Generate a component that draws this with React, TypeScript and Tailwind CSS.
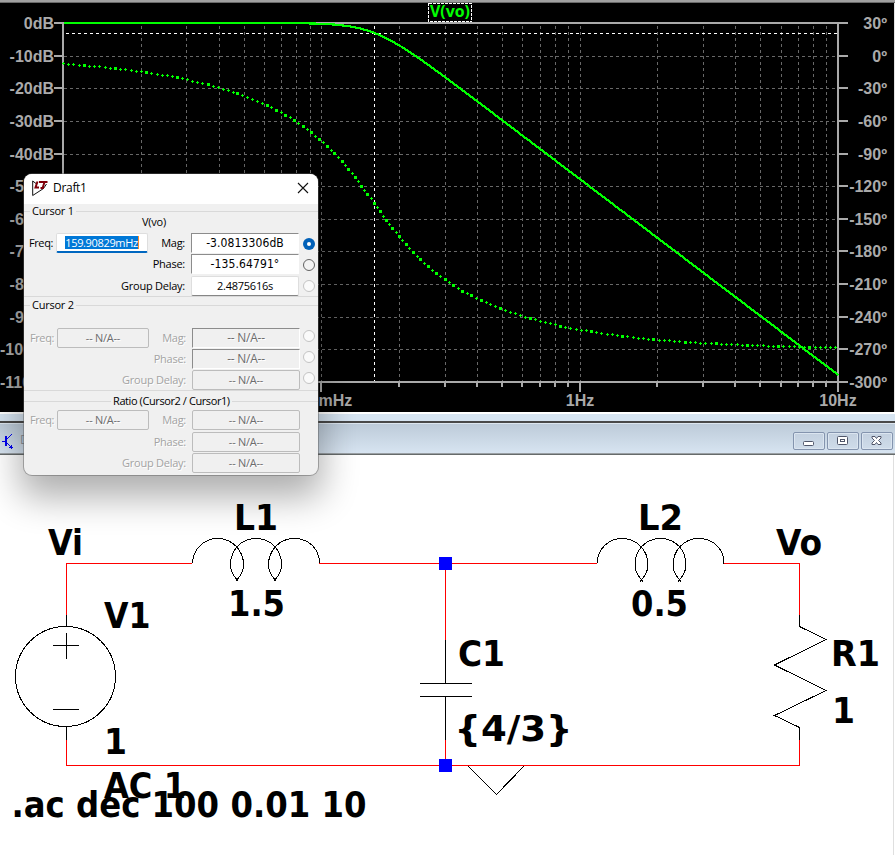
import React from 'react';

const ROWS = [23, 56, 88, 121, 154, 186, 219, 251, 284, 317, 349, 382];
const DB_LABELS = ['0dB', '-10dB', '-20dB', '-30dB', '-40dB', '-50dB', '-60dB', '-70dB', '-80dB', '-90dB', '-100dB', '-110dB'];
const DEG_LABELS = ['30º', '0º', '-30º', '-60º', '-90º', '-120º', '-150º', '-180º', '-210º', '-240º', '-270º', '-300º'];

const LEFT = 63;
const DECADE = 258.33;

const xOf = (f: number) => LEFT + Math.log10(f / 0.01) * DECADE;
const freqAt = (x: number) => 0.01 * Math.pow(10, (x - LEFT) / DECADE);

// third-order Butterworth low-pass, cut-off at 1 rad/s
const magY = (x: number) => {
  const w = 2 * Math.PI * freqAt(x);
  return 23 + 10 * Math.log10(1 + Math.pow(w, 6)) * 3.2636;
};
const phaseY = (x: number) => {
  const w = 2 * Math.PI * freqAt(x);
  const deg = (-(Math.atan(w) + Math.atan2(w, 1 - w * w)) * 180) / Math.PI;
  return 23 + ((30 - deg) * 359) / 330;
};

const magPoints = Array.from({ length: 156 }, (_, i) => {
  const x = LEFT + i * 5;
  return `${x + 0.5},${magY(x).toFixed(1)}`;
}).join(' ');

type Dot = { x: number; y: number; bold: boolean };
const phaseDots: Dot[] = [];
{
  let travelled = 5.17;
  for (let x = LEFT; x < 838; x += 0.1) {
    const dy = phaseY(x + 0.1) - phaseY(x);
    if (travelled >= 5.17) {
      const n = phaseDots.length;
      phaseDots.push({ x: Math.round(x), y: Math.round(phaseY(x)), bold: dy > 0.045 ? n % 2 === 0 : n % 6 === 4 });
      travelled = 0;
    }
    travelled += Math.hypot(0.1, dy);
  }
}

const gridX: { x: number; major: boolean }[] = [];
[0.01, 0.1, 1].forEach((d) => {
  for (let k = 1; k <= 9; k++) gridX.push({ x: Math.round(xOf(d * k)), major: k === 1 });
});
gridX.push({ x: 838, major: true });

function Plot() {
  return (
    <svg className="block" width="894" height="409" viewBox="0 3 894 409">
      <g stroke="#686868" strokeDasharray="3 3" shapeRendering="crispEdges">
        {gridX.filter((g) => g.x > 64 && g.x < 838).map((g) => (
          <line key={g.x} x1={g.x + 0.5} x2={g.x + 0.5} y1={26} y2={381} />
        ))}
        {ROWS.slice(1, -1).map((y) => (
          <line key={y} x1={64} x2={837} y1={y + 0.5} y2={y + 0.5} />
        ))}
      </g>
      <g stroke="#aaaaaa" strokeWidth={2} shapeRendering="crispEdges">
        <path d="M54 23H848M54 382H848M63 22V392M838 22V392" fill="none" />
        {ROWS.map((y) => (
          <path key={y} d={`M54 ${y}H63M838 ${y}H848`} />
        ))}
        {gridX.map((g) => (
          <line key={g.x} x1={g.x} x2={g.x} y1={382} y2={g.major ? 392 : 387} />
        ))}
      </g>
      <g stroke="#ffffff" strokeDasharray="3 3" shapeRendering="crispEdges">
        <line x1={66} x2={837} y1={33.5} y2={33.5} />
        <line x1={374.5} x2={374.5} y1={26} y2={381} />
      </g>
      <polyline points={magPoints} fill="none" stroke="#00ff00" strokeWidth={2.2} shapeRendering="crispEdges" />
      <g fill="#00ff00" shapeRendering="crispEdges">
        {phaseDots.map(({ x, y, bold }, i) => (
          <path key={i} d={bold ? `M${x - 1} ${y - 1}h3v3h-3z` : `M${x - 1} ${y}h3v1h-3zM${x} ${y - 1}h1v3h-1z`} />
        ))}
      </g>
      <g fill="#aaaaaa" className="font-['Liberation_Sans',Arial,sans-serif] text-[16px] font-bold">
        {ROWS.map((y, i) => (
          <React.Fragment key={y}>
            <text x={i > 9 ? 0 : 54} y={y + 6} textAnchor={i > 9 ? 'start' : 'end'}>{DB_LABELS[i]}</text>
            <text x={887} y={y + 6} textAnchor="end">{DEG_LABELS[i]}</text>
          </React.Fragment>
        ))}
        <text x={322} y={406} textAnchor="middle">100mHz</text>
        <text x={580} y={406} textAnchor="middle">1Hz</text>
        <text x={838} y={406} textAnchor="middle">10Hz</text>
      </g>
      <rect x={428.5} y={3.5} width={43} height={18} fill="#000" stroke="#fff" strokeDasharray="3 1" shapeRendering="crispEdges" />
      <text x={430} y={17} textLength={40} lengthAdjust="spacingAndGlyphs" fill="#00ff00" className="font-['Open_Sans','Noto_Sans',sans-serif] text-[16px] font-bold">V(vo)</text>
    </svg>
  );
}

function WindowButton({ children }: { children: React.ReactNode }) {
  return (
    <div className="flex h-[18px] w-8 items-center justify-center rounded-[2px] border border-[#8494ae] bg-linear-to-b from-[#c3d0df] to-[#cfdcea] shadow-[inset_0_0_0_1px_#dbe5f0]">
      {children}
    </div>
  );
}

function SchematicTitleBar() {
  return (
    <div className="flex h-[43px] flex-col">
      <div className="h-[2px] bg-white" />
      <div className="h-[7px] bg-[#d6e4f1]" />
      <div className="h-[2px] bg-[#494949]" />
      <div className="flex h-[30px] items-center border-t border-[#dde6ef] bg-linear-to-b from-[#bdcbd9] to-[#d7e4f1] pr-[2px]">
        <svg className="ml-[2px] mt-1" width="12" height="18" viewBox="0 0 12 18" fill="none" stroke="#0000f0" shapeRendering="crispEdges">
          <path d="M0 9.500H4M10 2L5 7M5 11L10 16M7 15.500H11M9.500 13V17" />
          <path d="M4 4V14" strokeWidth="2" />
        </svg>
        <span className="ml-[6px] mt-[3px] font-['Open_Sans',sans-serif] text-[12px] text-[#8d949c]">Draft1</span>
        <div className="ml-auto mt-[5px] flex gap-[2px]">
          <WindowButton>
            <svg className="mt-1" width="12" height="5" viewBox="0 0 12 5"><rect x=".5" y=".5" width="10" height="4" rx="1" fill="#fff" stroke="#50566a" /></svg>
          </WindowButton>
          <WindowButton>
            <svg width="12" height="10" viewBox="0 0 12 10"><rect x=".5" y=".5" width="10" height="8" rx="1" fill="#fff" stroke="#50566a" /><rect x="3.500" y="3.500" width="4" height="2" fill="#fff" stroke="#50566a" /></svg>
          </WindowButton>
          <WindowButton>
            <svg width="12" height="10" viewBox="0 0 12 10"><path d="M1 .5h3l1.500 2 1.500-2h3v1.500l-2.500 2.500 2.500 2.500v1.500h-3l-1.500-2-1.500 2h-3v-1.500l2.500-2.500-2.500-2.500z" fill="#fff" stroke="#50566a" /></svg>
          </WindowButton>
        </div>
      </div>
      <div className="h-px bg-[#9aa0a4]" />
      <div className="h-px bg-[#666b6b]" />
    </div>
  );
}

const COIL =
  'M192.500 563.500C193 549 204 538.500 217.500 538.500C232 538.500 243.500 550 243.500 565C243.500 570 241.500 574 238.500 578L235.500 581.500' +
  'M238.500 581.500L235.500 578C232.500 574 230.500 570 230.500 565C230.500 550 241 538.500 256 538.500C271 538.500 281.500 550 281.500 565C281.500 570 279.500 574 276.500 578L273.500 581.500' +
  'M276.500 581.500L273.500 578C270.500 574 268.500 570 268.500 565C268.500 550 280 538.500 294 538.500C309 538.500 319.500 549 319.500 563.500';

const SCHEMATIC_TEXT: [number, number, number, string][] = [
  [234, 530, 44, 'L1'],
  [228, 616, 57, '1.5'],
  [48, 555, 35, 'Vi'],
  [104, 628, 46.5, 'V1'],
  [104, 754, 23, '1'],
  [104, 798, 82, 'AC 1'],
  [11.5, 817, 355, '.ac dec 100 0.01 10'],
  [458, 666, 47, 'C1'],
  [454.5, 741, 118, '{4/3}'],
  [638, 530, 45, 'L2'],
  [631, 616, 57, '0.5'],
  [776, 555, 46, 'Vo'],
  [831, 666, 49, 'R1'],
  [832, 723, 23, '1'],
];

function Schematic() {
  return (
    <svg className="block" width="893" height="400" viewBox="0 455 893 400">
      <g fill="none" stroke="#000" shapeRendering="crispEdges">
        <circle cx="65.500" cy="676.500" r="50" />
        <path d="M66.500 615V626M66.500 726V740M53 645.500H79M66.500 633V659M53 709.500H79" />
        <path d={COIL} />
        <path d={COIL} transform="translate(404.500 0)" />
        <path d="M445.500 640V684M420 683.500H472M420 696.500H472M445.500 697V740" />
        <path d="M799.500 615V626.500L826 639.500L774.500 665L826 690.500L774.500 715.500L799.500 727.500V740" />
        <path d="M468 766L496.500 794.500L524 766" />
      </g>
      <path
        d="M66.500 615V563.500H192M319 563.500H597M724 563.500H799.500V615M66.500 740V765.500H799.500V740M445.500 563V640M445.500 740V765"
        fill="none"
        stroke="#ff0000"
        shapeRendering="crispEdges"
      />
      <rect x="439" y="557" width="13" height="13" fill="#0000ff" />
      <rect x="439" y="759" width="13" height="13" fill="#0000ff" />
      <g className="font-['DejaVu_Sans_Condensed','DejaVu_Sans',sans-serif] text-[35.5px] font-bold">
        {SCHEMATIC_TEXT.map(([x, y, w, t]) => (
          <text key={`${x}-${y}`} x={x} y={y} textLength={w} lengthAdjust="spacingAndGlyphs">{t}</text>
        ))}
      </g>
    </svg>
  );
}

type Radio = 'on' | 'off' | 'disabled';

function RadioDot({ state }: { state: Radio }) {
  if (state === 'on') {
    return (
      <span className="ml-1 mt-[2px] flex size-3 items-center justify-center rounded-full bg-[#0060b8]">
        <span className="size-1 rounded-full bg-white" />
      </span>
    );
  }
  return state === 'off' ? (
    <span className="ml-1 mt-[2px] size-3 rounded-full border border-[#626262] bg-[#f3f3f3]" />
  ) : (
    <span className="ml-1 size-3 rounded-full border border-[#c4c4c4] bg-[#fafafa]" />
  );
}

function Field({ label, value, className }: { label: string; value: string; className: string }) {
  return (
    <>
      <span className="ml-auto mr-[6px]">{label}</span>
      <span className={`flex h-5 w-[108px] items-center justify-center border ${className}`}>{value}</span>
    </>
  );
}

const SUNKEN = 'border-t-[#8c8c8c] border-l-[#8c8c8c] border-r-white border-b-white';
const WHITE_SUNKEN = `${SUNKEN} bg-white font-['DejaVu_Sans_Condensed',sans-serif] text-[12px] tracking-[0.1px]`;
const GREY_SUNKEN = `${SUNKEN} text-[12px] text-[#6d6d6d]`;
const FLAT = 'rounded-[2px] border-[#bcbcbc] text-[#6d6d6d]';

function Legend({ text, lead, className }: { text: string; lead: string; className: string }) {
  return (
    <div className={`flex h-[14px] items-center ${className}`}>
      <span className={`h-px bg-[#d9d9d9] ${lead}`} />
      <span className="px-[2px]">{text}</span>
      <span className="h-px flex-1 bg-[#d9d9d9]" />
    </div>
  );
}

function FreqNA() {
  return (
    <>
      <span className="ml-[6px] w-[27px] tracking-[-0.4px]">Freq:</span>
      <span className="flex h-5 w-[92px] items-center justify-center rounded-[2px] border border-[#bcbcbc] text-[#6d6d6d]">-- N/A--</span>
    </>
  );
}

function LiftedRadio() {
  return (
    <span className="-ml-px mr-[3px] flex pb-[4px]">
      <RadioDot state="disabled" />
    </span>
  );
}

function CursorDialog() {
  return (
    <div className="absolute left-6 top-[174px] flex h-[301px] w-[294px] flex-col overflow-hidden rounded-lg bg-[#f0f0f0] font-['Open_Sans','Noto_Sans',sans-serif] text-[11px] leading-[14px] tracking-[-0.25px] whitespace-nowrap text-black shadow-[0_0_0_1px_rgba(90,90,90,0.45),0_18px_36px_4px_rgba(0,0,0,0.32)]">
      <div className="flex h-[30px] shrink-0 items-center bg-white pb-[2px] pl-2 pr-[9px]">
        <svg width="16" height="17" viewBox="0 0 16 17" fill="none">
          <path d="M.7 1V15.500L11.500 8.500M.7 1L4 3.500M14.500 4L11.500 8.500" stroke="#111" />
          <path d="M5.500 1.500L3.500 7.500H7" stroke="#80000a" strokeWidth="2" />
          <path d="M7 2H15.500M12.500 2L10.500 8.500M8.500 8H12" stroke="#80000a" strokeWidth="2" />
        </svg>
        <span className="ml-[5px] text-[12px] tracking-[-0.3px]">Draft1</span>
        <svg className="ml-auto" width="12" height="12" viewBox="0 0 12 12" stroke="#111" strokeWidth="1.100"><path d="M1 1L11 11M11 1L1 11" /></svg>
      </div>

      <Legend text="Cursor 1" lead="w-[6px]" className="" />
      <div className="-mt-[3px] mb-[3px] flex h-[14px] items-center pl-[118px]">V(vo)</div>
      <div className="mt-px flex h-[20px] items-center">
        <span className="ml-[5px] w-[27px] tracking-[-0.4px]">Freq:</span>
        <span className="flex h-[20px] w-[92px] items-center justify-center rounded-[2px] border border-[#dedede] border-b-2 border-b-[#0067c0] bg-white">
          <span className="border-r border-[#ff8a28] bg-[#0078d7] text-[11px] leading-[13px] tracking-[-0.35px] text-white">159.90829mHz</span>
        </span>
        <Field label="Mag:" value="-3.0813306dB" className={WHITE_SUNKEN} />
        <RadioDot state="on" />
        <span className="w-[3px]" />
      </div>
      <div className="flex h-[22px] items-center">
        <Field label="Phase:" value="-135.64791°" className={WHITE_SUNKEN} />
        <RadioDot state="off" />
        <span className="w-[3px]" />
      </div>
      <div className="flex h-[21px] items-center">
        <Field label="Group Delay:" value="2.4875616s" className="rounded-[2px] border-[#dedede] border-b-[#868686] bg-white" />
        <RadioDot state="disabled" />
        <span className="w-[3px]" />
      </div>
      <div className="h-px bg-[#d9d9d9]" />

      <Legend text="Cursor 2" lead="w-[6px]" className="mt-px" />
      <div className="mt-4 flex h-[62px] flex-col text-[#a3a3a3] [text-shadow:1px_1px_0_#fff]">
        <div className="flex h-[21px] items-center">
          <FreqNA />
          <Field label="Mag:" value="-- N/A--" className={GREY_SUNKEN} />
          <LiftedRadio />
        </div>
        <div className="flex h-[21px] items-center">
          <Field label="Phase:" value="-- N/A--" className={GREY_SUNKEN} />
          <LiftedRadio />
        </div>
        <div className="flex h-[21px] items-center">
          <Field label="Group Delay:" value="-- N/A--" className={FLAT} />
          <LiftedRadio />
        </div>
      </div>
      <div className="h-px bg-[#d9d9d9]" />

      <Legend text="Ratio (Cursor2 / Cursor1)" lead="w-[87px]" className="mt-[3px] tracking-[-0.41px]" />
      <div className="mt-[1px] flex flex-col pr-[18px] text-[#a3a3a3] [text-shadow:1px_1px_0_#fff]">
        <div className="flex h-[22px] items-center">
          <FreqNA />
          <Field label="Mag:" value="-- N/A--" className={FLAT} />
        </div>
        <div className="flex h-[21px] items-center">
          <Field label="Phase:" value="-- N/A--" className={FLAT} />
        </div>
        <div className="flex h-[21px] items-center">
          <Field label="Group Delay:" value="-- N/A--" className={FLAT} />
        </div>
      </div>
    </div>
  );
}

export default function App() {
  return (
    <div className="relative flex h-[855px] w-[895px] flex-col overflow-hidden bg-white">
      <div className="h-[2px] bg-[#a0a0a0]" />
      <div className="h-px bg-[#696969]" />
      <div className="h-[409px] border-r border-[#e3e3e3] bg-black">
        <Plot />
      </div>
      <SchematicTitleBar />
      <div className="w-[894px] flex-1 border-r border-[#dfdfdf] bg-white">
        <Schematic />
      </div>
      <CursorDialog />
    </div>
  );
}
